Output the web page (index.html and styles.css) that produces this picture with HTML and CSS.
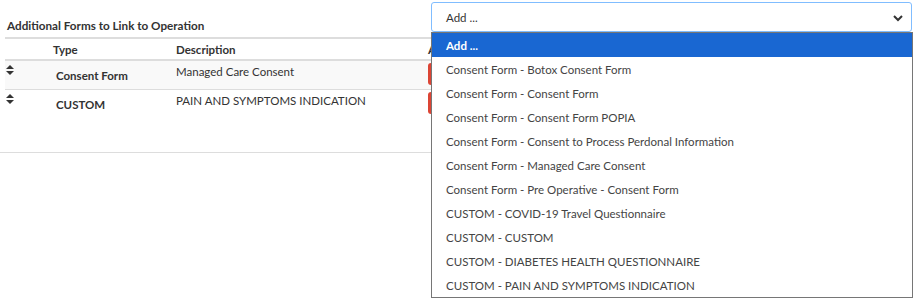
FILE: index.html
```html
<!DOCTYPE html>
<html lang="en">
<head>
    <meta charset="UTF-8">
    <title>Additional Forms</title>
    <link rel="stylesheet" href="styles.css">
</head>
<body>
    <section class="forms-panel">
        <div class="panel-top">
            <h4 class="panel-title">Additional Forms to Link to Operation</h4>
            <div class="picker">
                <div class="picker-box">
                    <span>Add ...</span>
                    <svg class="chevron" width="10" height="8" viewBox="0 0 10 8"><path d="M1 2 L5 6 L9 2" fill="none" stroke="#333" stroke-width="2"/></svg>
                </div>
                <ul class="picker-list">
                    <li class="active">Add ...</li>
                    <li>Consent Form - Botox Consent Form</li>
                    <li>Consent Form - Consent Form</li>
                    <li>Consent Form - Consent Form POPIA</li>
                    <li>Consent Form - Consent to Process Perdonal Information</li>
                    <li>Consent Form - Managed Care Consent</li>
                    <li>Consent Form - Pre Operative - Consent Form</li>
                    <li>CUSTOM - COVID-19 Travel Questionnaire</li>
                    <li>CUSTOM - CUSTOM</li>
                    <li>CUSTOM - DIABETES HEALTH QUESTIONNAIRE</li>
                    <li>CUSTOM - PAIN AND SYMPTOMS INDICATION</li>
                </ul>
            </div>
        </div>

        <table class="forms-table">
            <thead>
                <tr>
                    <th class="col-sort"></th>
                    <th class="col-type">Type</th>
                    <th class="col-desc">Description</th>
                    <th class="col-action">Action</th>
                </tr>
            </thead>
            <tbody>
                <tr class="striped">
                    <td class="col-sort"><svg width="8" height="10" viewBox="0 0 8 10"><path d="M4 0 L8 4 H0 Z M0 6 H8 L4 10 Z" fill="#333"/></svg></td>
                    <td class="col-type"><b>Consent Form</b></td>
                    <td class="col-desc">Managed Care Consent</td>
                    <td class="col-action"><span class="btn-remove"></span></td>
                </tr>
                <tr>
                    <td class="col-sort"><svg width="8" height="10" viewBox="0 0 8 10"><path d="M4 0 L8 4 H0 Z M0 6 H8 L4 10 Z" fill="#333"/></svg></td>
                    <td class="col-type"><b>CUSTOM</b></td>
                    <td class="col-desc">PAIN AND SYMPTOMS INDICATION</td>
                    <td class="col-action"><span class="btn-remove"></span></td>
                </tr>
            </tbody>
        </table>
    </section>
</body>
</html>
```

FILE: styles.css
```css
html,
body {
    height: 100%;
}

body {
    margin: 0;
    min-height: 298px;
    font-family: Lato, "Open Sans", sans-serif;
    font-size: 11.5px;
    line-height: 15px;
    color: #333;
    background: #fff;
}

.forms-panel {
    height: 152px;
    border-bottom: 1px solid #ddd;
    padding: 0 0 0 5px;
}

.panel-top {
    display: flex;
    align-items: flex-end;
    padding-top: 2px;
}

.panel-title {
    flex: 1;
    margin: 0 0 -1px 2px;
    font-size: 11.7px;
    font-weight: bold;
    color: #333;
}

.picker {
    position: relative;
    width: 481px;
    margin-right: 1px;
}

.picker-box {
    height: 28px;
    border: 1px solid #80bdff;
    border-radius: 3px;
    display: flex;
    align-items: center;
    justify-content: space-between;
    padding: 0 8px 0 14px;
    background: #fff;
}

.chevron {
    margin-top: 1px;
}

.picker-list {
    position: absolute;
    left: 0;
    right: -1px;
    top: 30px;
    margin: 0;
    padding: 0;
    list-style: none;
    border: 1px solid #767676;
    background: #fff;
    z-index: 2;
}

.picker-list li {
    height: 24px;
    line-height: 25px;
    padding-left: 14px;
    color: #444;
}

.picker-list li.active {
    background: #1967d2;
    color: #fff;
    font-weight: bold;
}

.forms-table {
    width: 908px;
    border-collapse: collapse;
    margin-top: 5px;
}

.forms-table th {
    text-align: left;
    font-weight: bold;
    height: 20px;
    padding: 0;
    border-top: 2px solid #ddd;
    border-bottom: 2px solid #ddd;
    vertical-align: middle;
}

.forms-table td {
    vertical-align: top;
    height: 25px;
    padding: 0;
    border-bottom: 1px solid #ddd;
}

.forms-table tbody tr:last-child td {
    border-bottom: none;
}

.striped td {
    background: #f9f9f9;
}

.col-sort {
    width: 48px;
}

.col-sort svg {
    display: block;
    margin: 4px 0 0 1px;
}

.col-type {
    width: 123px;
}

.col-type b {
    display: block;
    padding: 7px 0 0 3px;
}

.col-desc {
    width: 252px;
}

td.col-desc {
    padding-top: 3px;
}

.btn-remove {
    display: block;
    width: 30px;
    height: 22px;
    margin-top: 2px;
    background: #dc4535;
    border-radius: 3px;
}
```
